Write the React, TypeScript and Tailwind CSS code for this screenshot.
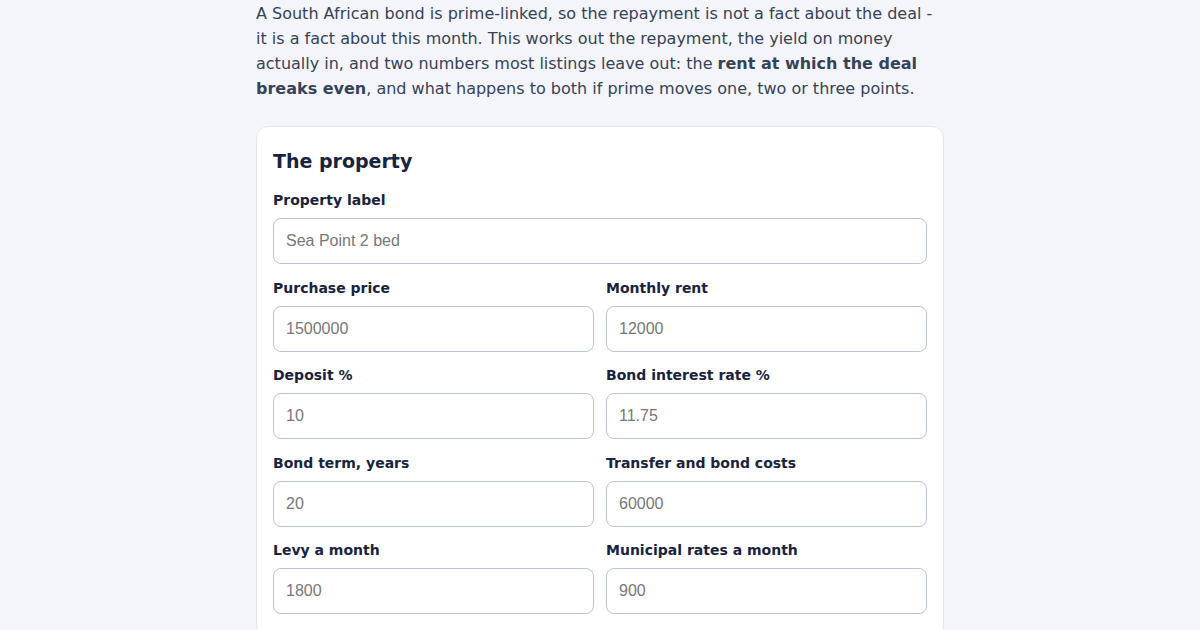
const fields: { label: string; placeholder: string }[][] = [
  [
    { label: 'Purchase price', placeholder: '1500000' },
    { label: 'Monthly rent', placeholder: '12000' },
  ],
  [
    { label: 'Deposit %', placeholder: '10' },
    { label: 'Bond interest rate %', placeholder: '11.75' },
  ],
  [
    { label: 'Bond term, years', placeholder: '20' },
    { label: 'Transfer and bond costs', placeholder: '60000' },
  ],
  [
    { label: 'Levy a month', placeholder: '1800' },
    { label: 'Municipal rates a month', placeholder: '900' },
  ],
];

function Field({ label, placeholder }: { label: string; placeholder: string }) {
  return (
    <label className="flex flex-col">
      <span className="text-[14px] leading-[20px] font-bold text-[#172340] mb-2">{label}</span>
      <input
        type="text"
        placeholder={placeholder}
        className="h-[46px] w-full rounded-lg border border-[#b9c3da] bg-white px-3 text-[16px] text-[#172340] placeholder:text-[#777] outline-none font-['Liberation_Sans',Arial,sans-serif]"
      />
    </label>
  );
}

export default function App() {
  return (
    <div className="min-h-screen bg-[#f4f5fa] font-['DejaVu_Sans',sans-serif]">
      <div className="mx-auto w-[688px] pt-px">
        <p className="text-[16px] leading-[25px] text-[#364259]">
          A South African bond is prime-linked, so the repayment is not a fact about the deal - it is a fact
          about this month. This works out the repayment, the yield on money actually in, and two numbers most
          listings leave out: the <strong>rent at which the deal breaks even</strong>, and what happens to both
          if prime moves one, two or three points.
        </p>

        <section className="mt-[25px] rounded-xl border border-[#e2e6f0] bg-white px-4 pt-4 pb-6">
          <h2 className="text-[19px] leading-[36px] font-bold text-[#172340] mb-[11px]">The property</h2>
          <div className="flex flex-col gap-[13.5px]">
            <Field label="Property label" placeholder="Sea Point 2 bed" />
            {fields.map((row, i) => (
              <div key={i} className="grid grid-cols-2 gap-3">
                {row.map(f => (
                  <Field key={f.label} label={f.label} placeholder={f.placeholder} />
                ))}
              </div>
            ))}
          </div>
        </section>
      </div>
    </div>
  );
}
